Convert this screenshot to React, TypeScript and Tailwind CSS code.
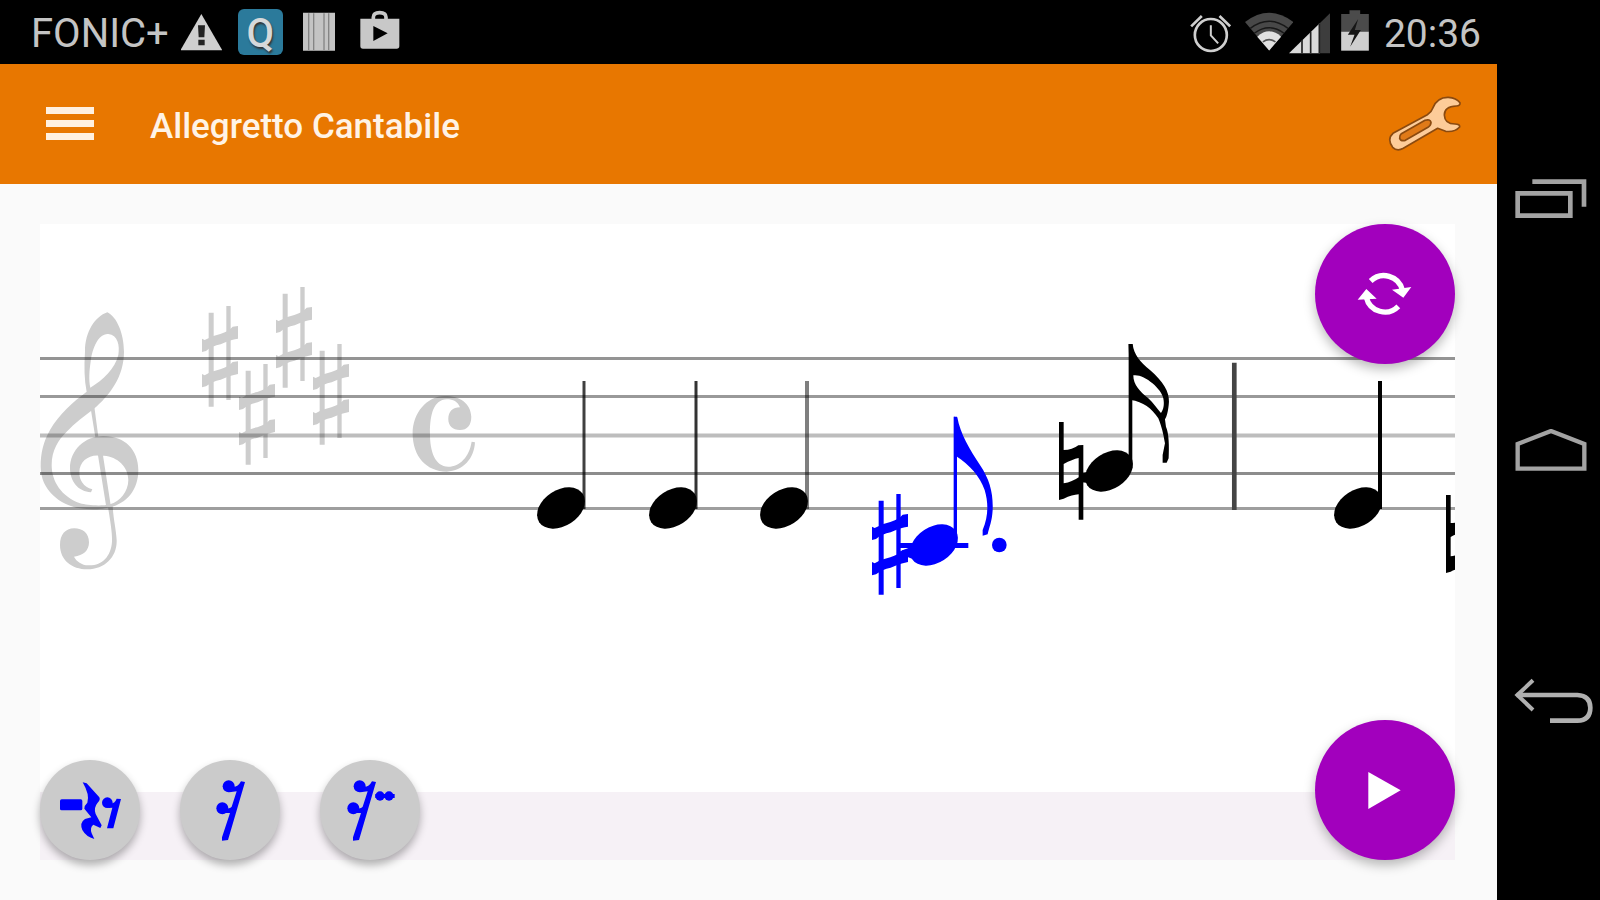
import React from 'react';

interface PointProps {
  x: number;
  y: number;
}

const Sharp: React.FC<PointProps> = ({ x, y }) => (
  <g transform={`translate(${x} ${y}) scale(0.3333)`}>
    <path d="M20 20h15v282H20zM73 0h13v282H73z" />
    <path d="M0 98L8 102Q30 89 55 84Q80 76 92 62L108 60V98L99 100Q82 103 56 115Q30 120 12 135L0 138Z" />
    <path d="M0 204L8 208Q30 195 55 190Q80 182 92 168L108 166V204L99 206Q82 209 56 221Q30 226 12 241L0 244Z" />
  </g>
);

const Natural: React.FC<PointProps> = ({ x, y }) => (
  <path
    transform={`translate(${x} ${y}) scale(0.3333)`}
    fillRule="evenodd"
    d="M0 0h14v84Q40 84 58 70L73 69v224H59v-76Q40 218 14 230L0 234zM14 126v58Q40 180 59 166v-58Q40 112 14 126z"
  />
);

const NoteHead: React.FC<PointProps> = ({ x, y }) => (
  <ellipse rx="26" ry="18" transform={`translate(${x} ${y}) rotate(-33)`} />
);

const staffLines = [
  { y: 358, width: 3, opacity: 0.42 },
  { y: 396, width: 3, opacity: 0.4 },
  { y: 435, width: 4, opacity: 0.26 },
  { y: 473, width: 3, opacity: 0.45 },
  { y: 508, width: 3, opacity: 0.38 },
];

const quarterNotes = [
  { head: 561, stem: 584, stemWidth: 3, opacity: 0.75 },
  { head: 673, stem: 696, stemWidth: 3, opacity: 0.8 },
  { head: 784, stem: 807, stemWidth: 4, opacity: 0.5 },
  { head: 1358, stem: 1380, stemWidth: 4, opacity: 1 },
];

const Score = () => (
  <svg
    viewBox="40 224 1415 568"
    preserveAspectRatio="xMinYMid meet"
    className="min-h-0 w-full flex-1 bg-white"
    role="img"
    aria-label="Score"
  >
    <g fill="#cdcdcd">
      {/* treble clef */}
      <g transform="translate(30 290) scale(0.3333)">
        <path
          fillRule="evenodd"
          d="M232 67C195 80 165 125 165 185C162 230 163 270 170 305C130 335 85 375 60 420C40 455 32 490 32 530C32 600 90 645 150 655C180 659 215 659 240 652C290 640 325 600 325 540C325 480 285 438 220 438C165 438 120 480 120 535C120 575 145 605 183 607L187 598C160 590 148 570 148 548C148 515 175 495 205 497L222 497C262 500 295 530 295 570C295 605 270 635 240 643C210 650 170 645 150 640C95 620 65 575 65 525C65 480 85 450 110 425C135 400 160 380 190 358C240 315 282 260 282 185C282 130 260 80 232 67ZM235 132C263 135 270 165 265 195C255 235 220 270 181 293C176 270 178 240 182 215C187 175 205 130 235 132Z"
        />
        <path d="M182 355L193 350L205 440L196 442ZM203 490L218 490L243 652L229 652Z" />
        <path d="M233 645C242 700 247 730 246 755C243 800 215 828 175 826C155 825 140 815 132 800C160 797 177 782 177 757C177 730 158 715 133 715C105 715 90 735 90 765C90 810 125 838 172 838C225 838 262 800 260 750C258 715 250 690 248 645Z" />
      </g>
      <Sharp x={202} y={306} />
      <Sharp x={239} y={364} />
      <Sharp x={276} y={287} />
      <Sharp x={313} y={344} />
      {/* common time */}
      <path
        transform="translate(30 270) scale(0.3333)"
        d="M1245 378C1190 378 1148 430 1148 490C1148 560 1190 605 1250 605C1300 603 1333 565 1335 517L1325 515C1318 560 1290 590 1255 590C1215 590 1200 545 1200 490C1200 430 1212 390 1250 388C1270 388 1283 395 1290 412C1268 412 1255 425 1255 447C1255 467 1268 480 1290 480C1312 480 1324 465 1324 440C1322 400 1290 378 1245 378Z"
      />
    </g>

    {staffLines.map(({ y, width, opacity }) => (
      <path key={y} d={`M40 ${y}.5H1455`} stroke="#000" strokeWidth={width} strokeOpacity={opacity} />
    ))}

    {quarterNotes.map(({ head, stem, stemWidth, opacity }) => (
      <g key={head}>
        <NoteHead x={head} y={508} />
        <path d={`M${stem} 381V509`} stroke="#000" strokeWidth={stemWidth} strokeOpacity={opacity} />
      </g>
    ))}

    {/* note being played */}
    <g fill="#00f">
      <Sharp x={872} y={494} />
      <NoteHead x={934} y={545} />
      <g transform="translate(850 330) scale(0.3333)">
        <path d="M311 260h10v385h-10zM150 639h205v15H150zM140 668l50-20v40z" />
        <path d="M312 260L322 262C330 310 360 360 390 405C420 450 430 490 428 540C426 575 418 590 413 613L398 617L398 600C415 560 416 520 404 480C390 440 360 405 318 378Z" />
        <circle cx="448" cy="645" r="22" />
      </g>
    </g>

    <Natural x={1059} y={422} />
    <NoteHead x={1109} y={471} />
    <g transform="translate(850 330) scale(0.3333)">
      <path d="M836 42h11v372h-11zM690 432l30-8v36l-30-4z" />
      <path
        fillRule="evenodd"
        d="M836 42L848 42C852 75 870 95 900 120C940 155 958 185 957 215C955 245 950 260 945 268L948 290C957 310 958 350 956 385L950 398L938 398L938 375L945 340C940 310 935 290 925 265C905 235 880 215 842 210ZM850 136C880 130 935 175 940 205C944 225 940 240 933 249C920 235 910 218 895 205C870 185 850 165 850 136Z"
      />
      <path d="M1153 98V540" stroke="#444" strokeWidth="14" />
    </g>
    <Natural x={1446} y={495} />
  </svg>
);

const StatusBar = () => (
  <div className="flex h-16 shrink-0 items-center bg-black pl-[31px] pr-4 text-[40px] leading-none text-[#c4c4c4]">
    <span className="pt-1">FONIC+</span>
    <svg viewBox="540 24 123 144" className="ml-3 h-12 w-[41px]" fill="#cfcfcf">
      <path d="M601 42L664 151H538Z" />
      <path d="M591 76h21l-2 36h-17zM592 119h19v17h-19z" fill="#222" />
    </svg>
    <span className="ml-4 flex h-[46px] w-[45px] items-center justify-center rounded-md bg-[#2b7a9b] pt-1 font-medium text-[#d5d8da] [text-shadow:1px_2px_2px_#333]">
      Q
    </span>
    <svg viewBox="912 24 96 144" className="ml-5 h-12 w-8" fill="#c4c4c4">
      <path d="M912 38h96v114h-96z" />
      <path d="M929 40v110M944 40v110M975 40v110M989 40v110" stroke="#858585" strokeWidth="4" />
    </svg>
    <svg viewBox="1083 24 118 144" className="ml-[25px] h-12 w-10" fill="#c8c8c8">
      <path d="M1122 58V52q0-14 19-14t19 14v6" fill="none" stroke="#c8c8c8" strokeWidth="11" />
      <path fillRule="evenodd" d="M1083 56h117v82q0 8-8 8h-101q-8 0-8-8zM1122 78v45l43-23z" />
    </svg>

    <svg viewBox="63 24 122 144" className="ml-auto h-12 w-[41px]" fill="none" stroke="#cfcfcf">
      <circle cx="125" cy="105" r="48" strokeWidth="8" />
      <path d="M66 79L98 48M151 48l32 31" strokeWidth="8" />
      <path d="M125 76v30l22 24" strokeWidth="6" />
    </svg>
    <svg viewBox="228 24 145 144" className="ml-[14px] h-12 w-12">
      <path d="M301 152L228 66Q301 10 374 66Z" fill="#484848" />
      <path d="M244 85Q301 42 358 85M256 100Q301 66 346 100" fill="none" stroke="#181818" strokeWidth="4" />
      <path d="M301 152L265 110Q301 78 337 110Z" fill="#e0e0e0" />
      <path d="M282 126Q301 112 320 126" fill="none" stroke="#555" strokeWidth="5" />
    </svg>
    <svg viewBox="360 24 123 144" className="-ml-1 h-12 w-[41px]">
      <path d="M360 160L453 69V160Z" fill="#dadada" />
      <path d="M453 160V69L483 40V160Z" fill="#3d3d3d" />
      <path d="M399 120v40M425 95v65M451 70v90" stroke="#222" strokeWidth="5" />
    </svg>
    <svg viewBox="515 24 83 144" className="ml-[11px] h-12 w-7">
      <path d="M515 95V42h25V31h32v11h26v53z" fill="#4b4b4b" />
      <path d="M515 95h83v57h-83z" fill="#cfcfcf" />
      <path d="M566 57L535 104h20l-13 36 32-50h-18z" fill="#161616" />
    </svg>
    <time className="ml-[15px] pt-1 text-[39px]">20:36</time>
  </div>
);

const AppBar = () => (
  <header className="flex h-[120px] shrink-0 items-center bg-[#e87700] pl-[46px] pr-[35px]">
    <button type="button" aria-label="Open menu">
      <svg viewBox="0 0 48 34" className="h-[34px] w-12" fill="#fff0e0">
        <path d="M0 0h48v7H0zM0 13h48v7H0zM0 26h48v7H0z" />
      </svg>
    </button>
    <h1 className="ml-14 flex-1 pt-1 text-[35px] font-medium leading-none text-[#fff3e6]">Allegretto Cantabile</h1>
    <button type="button" aria-label="Settings">
      <svg viewBox="657 287 222 168" className="h-14 w-[74px]" fill="#fdcc99" stroke="#8a4a10" strokeWidth="5" strokeLinejoin="round">
        <path d="M672 399L775 343Q787 336 792 322Q805 290 838 291Q862 293 873 307Q874 317 862 317Q826 318 826 344Q827 371 858 371Q873 371 872 380Q858 396 830 393L806 384L703 444Q684 454 671 441Q653 416 672 399Z" />
        <path d="M697 400L768 360Q783 355 786 366Q786 375 777 381L709 420Q696 424 692 414Q691 405 697 400Z" fill="#e07a18" />
      </svg>
    </button>
  </header>
);

const NavBar = () => (
  <nav className="flex w-[103px] shrink-0 flex-col bg-black pb-[74px] pt-[74px]">
    <button type="button" aria-label="Recent apps" className="flex flex-1 items-center pl-[18px]">
      <svg viewBox="1036 540 216 120" className="h-10 w-[72px]" fill="none" stroke="#a3a3a3" strokeWidth="14">
        <path d="M1044 583h158v67h-158zM1088 548h155v75" />
      </svg>
    </button>
    <button type="button" aria-label="Home" className="flex flex-1 items-center pl-[18px]">
      <svg viewBox="704 650 216 129" className="h-[43px] w-[72px]" fill="none" stroke="#a3a3a3" strokeWidth="13">
        <path d="M712 769V695L812 656L912 695V769Z" />
      </svg>
    </button>
    <button type="button" aria-label="Back" className="flex flex-1 items-center pl-[17px]">
      <svg viewBox="674 48 237 138" className="h-[46px] w-[79px]" fill="none" stroke="#b0b0b0" strokeWidth="14">
        <path d="M682 99H864Q903 101 903 137Q903 175 864 176H782" />
        <path d="M731 55L684 99L731 144" strokeWidth="12" />
      </svg>
    </button>
  </nav>
);

const rests = [
  {
    label: 'Rests',
    viewBox: '30 60 300 300',
    shape: (
      <>
        <rect x="90" y="178" width="67" height="33" rx="5" />
        <path d="M158 127L170 130L208 172Q212 180 203 188Q190 203 197 222L215 256L211 264L190 254Q179 262 185 280L193 297Q168 290 157 270Q148 248 165 237L184 232L163 206Q163 196 172 188Q180 165 158 127Z" />
        <circle cx="232" cy="188" r="16" />
        <path d="M235 190Q253 194 260 176L273 177L250 265L231 265L247 203L235 204Z" />
      </>
    ),
  },
  {
    label: 'Sixteenth rest',
    viewBox: '450 60 300 300',
    shape: (
      <>
        <circle cx="596" cy="139" r="18" />
        <circle cx="577" cy="205" r="18" />
        <path d="M598 141Q622 146 633 124L645 126L594 300L576 302L576 292L600 219L577 219V209Q600 206 605 200L620 154L598 157Z" />
      </>
    ),
  },
  {
    label: 'Dotted sixteenth rest',
    viewBox: '870 60 300 300',
    shape: (
      <>
        <circle cx="989" cy="139" r="18" />
        <circle cx="970" cy="205" r="18" />
        <path d="M991 141Q1015 146 1026 124L1038 126L987 300L969 302L969 292L993 219L970 219V209Q993 206 998 200L1013 154L991 157Z" />
        <circle cx="1050" cy="168" r="14" />
        <circle cx="1077" cy="168" r="14" />
        <path d="M1036 162h58v12h-58z" />
      </>
    ),
  },
];

const fabClass =
  'absolute right-0 size-[140px] rounded-full bg-[#a200bd] shadow-[0_5px_12px_rgba(0,0,0,0.28)]';

export default function App() {
  return (
    <div className="flex h-screen overflow-hidden bg-black font-[Roboto,sans-serif]">
      <div className="flex min-w-0 flex-1 flex-col">
        <StatusBar />
        <AppBar />
        <main className="flex min-h-0 flex-1 flex-col bg-[#fafafa] py-10 pl-10 pr-[42px]">
          <div className="relative flex min-h-0 flex-1 flex-col">
            <Score />
            <div className="h-[68px] shrink-0 bg-[#f6f1f6]" />

            <button type="button" aria-label="Repeat" className={`${fabClass} top-0`}>
              <svg viewBox="108 42 420 420" className="size-full" fill="#fff">
                <path
                  d="M275 213A57 57 0 0 1 370 240M262 262A57 57 0 0 0 358 289"
                  fill="none"
                  stroke="#fff"
                  strokeWidth="16"
                />
                <path d="M339 239L397 231L373 263ZM236 269L262 237L293 266Z" />
              </svg>
            </button>
            <button type="button" aria-label="Play" className={`${fabClass} bottom-0`}>
              <svg viewBox="78 180 420 420" className="size-full" fill="#fff">
                <path d="M238 336L335 391L238 447Z" />
              </svg>
            </button>

            <div className="absolute bottom-0 left-0 flex gap-10">
              {rests.map(({ label, viewBox, shape }) => (
                <button
                  key={label}
                  type="button"
                  aria-label={label}
                  className="size-[100px] rounded-full bg-[#cbcbcb] shadow-[0_5px_9px_rgba(0,0,0,0.3)]"
                >
                  <svg viewBox={viewBox} className="size-full" fill="#00f">
                    {shape}
                  </svg>
                </button>
              ))}
            </div>
          </div>
        </main>
      </div>
      <NavBar />
    </div>
  );
}
